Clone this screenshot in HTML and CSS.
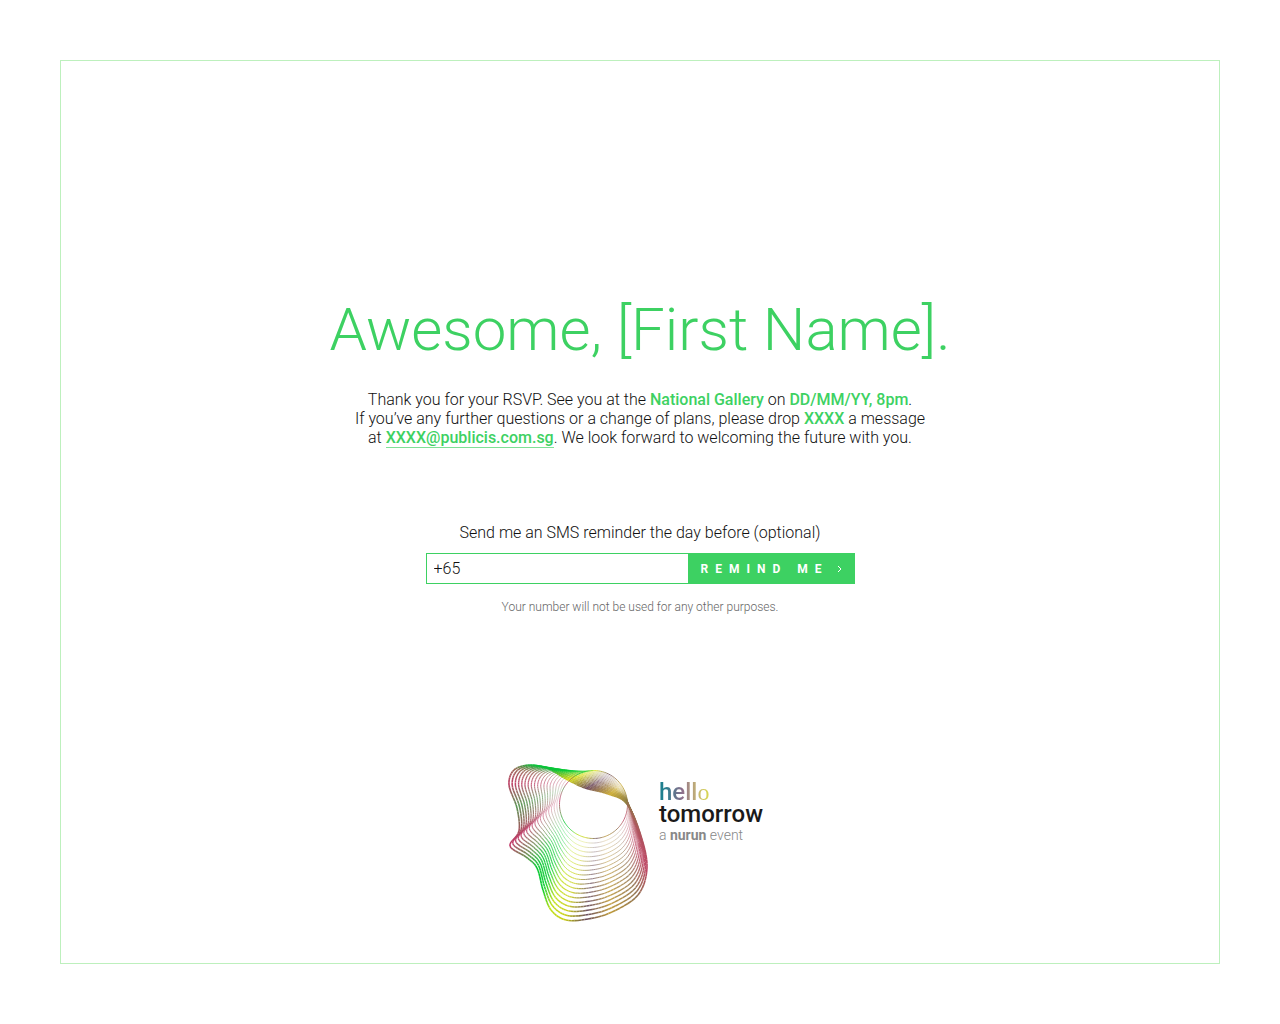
FILE: index.html
```
<!DOCTYPE html>
<html lang="en">
<head>
<meta charset="utf-8">
<meta name="viewport" content="width=device-width, initial-scale=1">
<title>Hello Tomorrow RSVP</title>
<link rel="stylesheet" href="styles.css">
</head>
<body>
<main class="frame">
  <h1 class="title">Awesome, [First Name].</h1>
  <p class="message">Thank you for your RSVP. See you at the <strong>National Gallery</strong> on <strong>DD/MM/YY, 8pm</strong>.<br>
  If you’ve any further questions or a change of plans, please drop <strong>XXXX</strong> a message<br>
  at <a href="mailto:XXXX@publicis.com.sg">XXXX@publicis.com.sg</a>. We look forward to welcoming the future with you.</p>
  <form class="reminder">
    <label for="phone">Send me an SMS reminder the day before (optional)</label>
    <div class="field">
      <input id="phone" type="tel" value="+65">
      <button type="button"><span>REMIND ME</span>
        <svg width="5" height="8" viewBox="0 0 5 8" aria-hidden="true"><path d="M1 1l3 3-3 3" fill="none" stroke="currentColor"/></svg>
      </button>
    </div>
    <p class="note">Your number will not be used for any other purposes.</p>
  </form>
  <footer class="logo">
    <svg class="mark" width="142" height="160" viewBox="507 763 142 160" aria-hidden="true"></svg>
    <div class="wordmark">
      <div class="hello">hell<span>o</span></div>
      <div class="tomorrow">tomorrow</div>
      <div class="event">a <b>nurun</b> event</div>
    </div>
  </footer>
</main>
<script src="logo.js"></script>
</body>
</html>
```
FILE: styles.css
```
* { box-sizing: border-box; }
body {
  margin: 0;
  min-height: 100vh;
  padding: 60px;
  display: flex;
  background: #fff;
  color: #111;
  font: 300 16px/19px Roboto, "Open Sans", sans-serif;
}
.frame {
  flex: 1;
  display: flex;
  flex-direction: column;
  align-items: center;
  padding: 233px 20px 40px;
  border: 1px solid #bdf0bd;
}
.title {
  margin: 0;
  color: #3dd162;
  font-size: 60px;
  font-weight: 300;
  line-height: 72px;
  text-align: center;
}
.message {
  margin: 24px 0 0;
  text-align: center;
  line-height: 19px;
}
.message strong, .message a {
  color: #3dd162;
  font-weight: 500;
}
.message a {
  text-decoration: none;
  border-bottom: 1px solid #7fe096;
}
.reminder {
  width: 429px;
  max-width: 100%;
  margin-top: 76px;
  text-align: center;
}
.reminder label {
  display: block;
  margin-bottom: 11px;
}
.field {
  display: flex;
  height: 31px;
}
.field input {
  flex: 1;
  min-width: 0;
  padding: 0 7px;
  border: 1px solid #3dd162;
  border-radius: 0;
  background: #fff;
  color: #111;
  font: inherit;
}
.field button {
  display: flex;
  align-items: center;
  justify-content: space-between;
  width: 166px;
  padding: 0 13px 0 12px;
  border: 0;
  background: #3dd162;
  color: #fff;
  font: 700 12px/16px Roboto, sans-serif;
  letter-spacing: 7px;
}
.note {
  margin: 14px 0 0;
  color: #666;
  font-size: 12px;
  line-height: 18px;
}
.logo {
  display: flex;
  gap: 10px;
  width: 266px;
  margin-top: 147px;
}
.mark { flex: none; }
.wordmark { padding-top: 18px; white-space: nowrap; }
.hello {
  width: 52px;
  background: linear-gradient(90deg, #1f7f8e 10%, #8f6f8c 45%, #c0ae78 70%, #dde04a);
  background-clip: text;
  -webkit-background-clip: text;
  color: transparent;
  font-size: 24px;
  font-weight: 500;
  line-height: 22px;
}
.hello span { font-family: "Liberation Serif", serif; font-weight: 400; }
.tomorrow {
  color: #1a1a1a;
  font-size: 24px;
  font-weight: 500;
  line-height: 22px;
}
.event {
  margin-top: 1px;
  color: #888;
  font-size: 14px;
  line-height: 18px;
}
.event b { font-weight: 700; }
```
FILE: logo.js
```
// Ribbon of closed curves blending from an outer outline to a circle.
// Each row: outline x, outline y, matching angle on the circle, colour.
const knots = [
  [627, 804, -10, [140, 125, 70]],
  [641, 836, 8, [175, 85, 95]],
  [647, 868, 26, [190, 70, 100]],
  [638, 895, 46, [145, 115, 80]],
  [612, 912, 68, [190, 155, 60]],
  [588, 919, 84, [105, 75, 90]],
  [566, 920, 101, [200, 205, 20]],
  [551, 910, 117, [190, 225, 20]],
  [543, 890, 133, [10, 205, 50]],
  [537, 868, 149, [10, 200, 50]],
  [526, 857, 165, [110, 140, 80]],
  [510, 846, 186, [195, 55, 105]],
  [519, 831, 197, [165, 85, 95]],
  [517, 808, 206, [90, 150, 85]],
  [509, 785, 217, [190, 60, 100]],
  [514, 770, 229, [150, 100, 80]],
  [530, 765, 242, [10, 195, 60]],
  [549, 769, 256, [10, 205, 50]],
  [566, 779, 272, [215, 225, 20]],
  [585, 788, 296, [115, 80, 95]],
  [608, 794, 323, [205, 175, 60]]
];
const centre = [593.5, 804.5], radius = 34, rings = 19, steps = 7;
const ns = "http://www.w3.org/2000/svg";
const mark = document.querySelector(".mark");
const n = knots.length;

function spline(a, b, c, d, u) {
  return 0.5 * (2 * b + (c - a) * u + (2 * a - 5 * b + 4 * c - d) * u * u + (3 * b - a - 3 * c + d) * u * u * u);
}

function point(s, t) {
  const i = Math.floor(s / steps), u = (s % steps) / steps;
  const k = [-1, 0, 1, 2].map(o => knots[(i + o + n) % n]);
  const x = spline(k[0][0], k[1][0], k[2][0], k[3][0], u);
  const y = spline(k[0][1], k[1][1], k[2][1], k[3][1], u);
  const end = k[2][2] < k[1][2] ? k[2][2] + 360 : k[2][2];
  const angle = (k[1][2] + (end - k[1][2]) * u) * Math.PI / 180;
  const cx = centre[0] + radius * Math.cos(angle), cy = centre[1] + radius * Math.sin(angle);
  return [x + (cx - x) * t, y + (cy - y) * t, k[1][3].map((c, j) => Math.round(c + (k[2][3][j] - c) * u))];
}

for (let r = 0; r < rings; r++) {
  const t = r / (rings - 1);
  const group = document.createElementNS(ns, "g");
  group.setAttribute("stroke-width", r === rings - 1 ? 0.9 : 1.6 - 1.1 * t);
  group.setAttribute("opacity", r === rings - 1 ? 0.9 : 1 - 0.5 * t);
  for (let s = 0; s < n * steps; s++) {
    const p = point(s, t), q = point((s + 1) % (n * steps), t);
    const line = document.createElementNS(ns, "path");
    line.setAttribute("d", `M${p[0]} ${p[1]}L${q[0]} ${q[1]}`);
    line.setAttribute("stroke", `rgb(${p[2]})`);
    group.appendChild(line);
  }
  mark.appendChild(group);
}
```
